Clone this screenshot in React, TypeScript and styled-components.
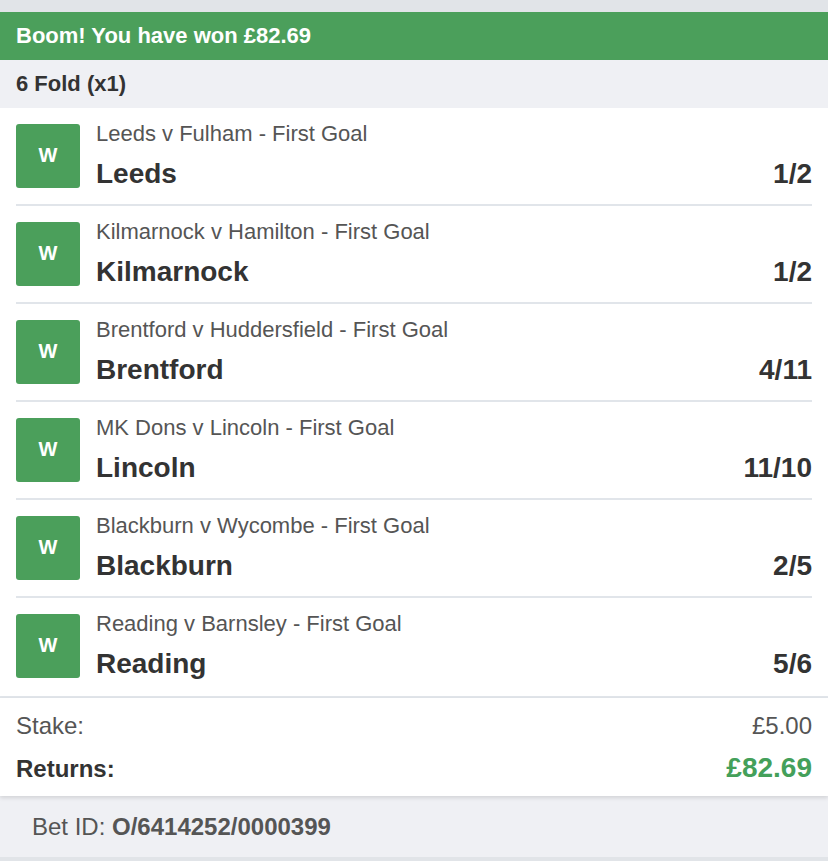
import React from "react";
import styled, { createGlobalStyle } from "styled-components";

const GlobalStyle = createGlobalStyle`
  body {
    margin: 0;
    background-color: #eff0f4;
    font-family: "Liberation Sans", Arial, sans-serif;
  }
`;

const Page = styled.div`
  width: 828px;
  height: 861px;
  overflow: hidden;
  background-color: #eff0f4;
  border-top: 12px solid #e1e4e8;
  box-sizing: border-box;
`;

const Banner = styled.div`
  height: 48px;
  padding: 0 16px;
  display: flex;
  align-items: center;
  background-color: #4b9f5b;
  color: #ffffff;
  font-size: 22px;
  font-weight: 700;
`;

const FoldHeader = styled.div`
  height: 48px;
  padding: 0 16px;
  display: flex;
  align-items: center;
  color: #333333;
  font-size: 22px;
  font-weight: 700;
`;

const Legs = styled.div`
  background-color: #ffffff;
  border-bottom: 2px solid #e1e5ea;
`;

const Leg = styled.div<{ last: boolean }>`
  margin: 0 16px;
  padding: 16px 0 ${({ last }) => (last ? "18px" : "16px")};
  display: flex;
  align-items: center;
  gap: 16px;
  border-bottom: ${({ last }) => (last ? "none" : "2px solid #e1e5ea")};
`;

const ResultBadge = styled.div`
  width: 64px;
  height: 64px;
  flex-shrink: 0;
  border-radius: 3px;
  background-color: #4b9f5b;
  color: #ffffff;
  font-size: 20px;
  font-weight: 700;
  display: flex;
  align-items: center;
  justify-content: center;
  padding-bottom: 2px;
  box-sizing: border-box;
`;

const LegInfo = styled.div`
  flex: 1;
  height: 64px;
  display: flex;
  flex-direction: column;
  gap: 15px;
`;

const Market = styled.div`
  color: #555555;
  font-size: 22px;
  line-height: 20px;
`;

const SelectionRow = styled.div`
  display: flex;
  justify-content: space-between;
  align-items: baseline;
`;

const Selection = styled.div`
  color: #333333;
  font-size: 28px;
  font-weight: 700;
  line-height: 29px;
`;

const Odds = styled.div`
  color: #333333;
  font-size: 28px;
  font-weight: 700;
  line-height: 29px;
`;

const Summary = styled.div`
  background-color: #ffffff;
  padding: 14px 16px 11px;
  display: flex;
  flex-direction: column;
  gap: 11px;
  box-shadow: 0 2px 4px rgba(0, 0, 0, 0.12);
  position: relative;
`;

const SummaryRow = styled.div`
  display: flex;
  justify-content: space-between;
  align-items: baseline;
`;

const SummaryLabel = styled.span<{ strong?: boolean }>`
  color: ${({ strong }) => (strong ? "#333333" : "#555555")};
  font-size: 24px;
  line-height: 28px;
  font-weight: ${({ strong }) => (strong ? 700 : 400)};
`;

const StakeValue = styled.span`
  color: #555555;
  font-size: 24px;
  line-height: 28px;
`;

const ReturnsValue = styled.span`
  color: #44a05a;
  font-size: 28px;
  line-height: 34px;
  font-weight: 700;
`;

const BetIdBar = styled.div`
  height: 61px;
  padding: 0 32px;
  display: flex;
  align-items: center;
  color: #555555;
  font-size: 24px;
  border-bottom: 4px solid #e1e4e8;

  strong {
    font-weight: 700;
  }
`;

const legs = [
  { market: "Leeds v Fulham - First Goal", selection: "Leeds", odds: "1/2" },
  { market: "Kilmarnock v Hamilton - First Goal", selection: "Kilmarnock", odds: "1/2" },
  { market: "Brentford v Huddersfield - First Goal", selection: "Brentford", odds: "4/11" },
  { market: "MK Dons v Lincoln - First Goal", selection: "Lincoln", odds: "11/10" },
  { market: "Blackburn v Wycombe - First Goal", selection: "Blackburn", odds: "2/5" },
  { market: "Reading v Barnsley - First Goal", selection: "Reading", odds: "5/6" },
];

function App() {
  return (
    <>
      <GlobalStyle />
      <Page>
        <Banner>Boom! You have won £82.69</Banner>
        <FoldHeader>6 Fold (x1)</FoldHeader>

        <Legs>
          {legs.map((leg, i) => (
            <Leg key={leg.selection} last={i === legs.length - 1}>
              <ResultBadge>W</ResultBadge>
              <LegInfo>
                <Market>{leg.market}</Market>
                <SelectionRow>
                  <Selection>{leg.selection}</Selection>
                  <Odds>{leg.odds}</Odds>
                </SelectionRow>
              </LegInfo>
            </Leg>
          ))}
        </Legs>

        <Summary>
          <SummaryRow>
            <SummaryLabel>Stake:</SummaryLabel>
            <StakeValue>£5.00</StakeValue>
          </SummaryRow>
          <SummaryRow>
            <SummaryLabel strong>Returns:</SummaryLabel>
            <ReturnsValue>£82.69</ReturnsValue>
          </SummaryRow>
        </Summary>

        <BetIdBar>
          Bet ID:&nbsp;<strong>O/6414252/0000399</strong>
        </BetIdBar>
      </Page>
    </>
  );
}

export default App;
